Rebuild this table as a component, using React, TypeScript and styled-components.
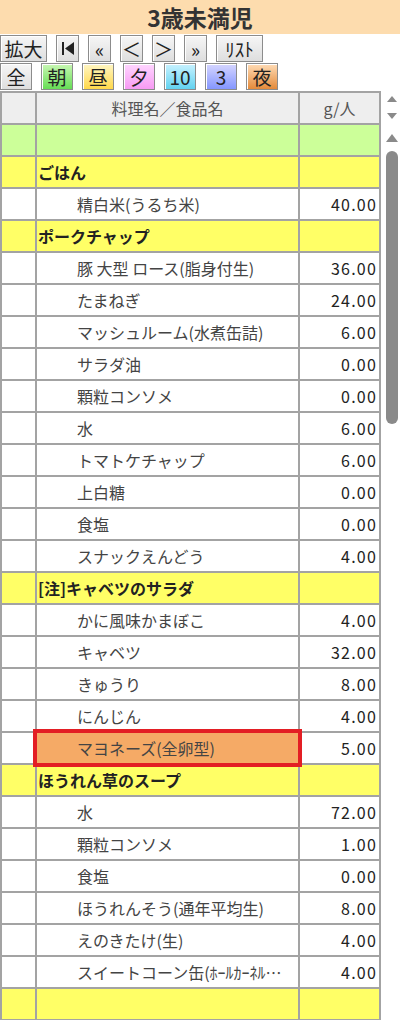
import React from 'react';
import styled, { createGlobalStyle, css } from 'styled-components';

type Row =
  | { kind: 'blank'; tone: 'green' | 'yellow' }
  | { kind: 'dish'; name: string }
  | { kind: 'item'; name: string; grams: string; selected?: boolean };

const rows: Row[] = [
  { kind: 'blank', tone: 'green' },
  { kind: 'dish', name: 'ごはん' },
  { kind: 'item', name: '精白米(うるち米)', grams: '40.00' },
  { kind: 'dish', name: 'ポークチャップ' },
  { kind: 'item', name: '豚 大型 ロース(脂身付生)', grams: '36.00' },
  { kind: 'item', name: 'たまねぎ', grams: '24.00' },
  { kind: 'item', name: 'マッシュルーム(水煮缶詰)', grams: '6.00' },
  { kind: 'item', name: 'サラダ油', grams: '0.00' },
  { kind: 'item', name: '顆粒コンソメ', grams: '0.00' },
  { kind: 'item', name: '水', grams: '6.00' },
  { kind: 'item', name: 'トマトケチャップ', grams: '6.00' },
  { kind: 'item', name: '上白糖', grams: '0.00' },
  { kind: 'item', name: '食塩', grams: '0.00' },
  { kind: 'item', name: 'スナックえんどう', grams: '4.00' },
  { kind: 'dish', name: '[注]キャベツのサラダ' },
  { kind: 'item', name: 'かに風味かまぼこ', grams: '4.00' },
  { kind: 'item', name: 'キャベツ', grams: '32.00' },
  { kind: 'item', name: 'きゅうり', grams: '8.00' },
  { kind: 'item', name: 'にんじん', grams: '4.00' },
  { kind: 'item', name: 'マヨネーズ(全卵型)', grams: '5.00', selected: true },
  { kind: 'dish', name: 'ほうれん草のスープ' },
  { kind: 'item', name: '水', grams: '72.00' },
  { kind: 'item', name: '顆粒コンソメ', grams: '1.00' },
  { kind: 'item', name: '食塩', grams: '0.00' },
  { kind: 'item', name: 'ほうれんそう(通年平均生)', grams: '8.00' },
  { kind: 'item', name: 'えのきたけ(生)', grams: '4.00' },
  { kind: 'item', name: 'スイートコーン缶(ﾎｰﾙｶｰﾈﾙ…', grams: '4.00' },
  { kind: 'blank', tone: 'yellow' },
];

type Tone = 'plain' | 'morning' | 'noon' | 'evening' | 'ten' | 'three' | 'night';

const mealButtons: { label: string; tone: Tone }[] = [
  { label: '全', tone: 'plain' },
  { label: '朝', tone: 'morning' },
  { label: '昼', tone: 'noon' },
  { label: '夕', tone: 'evening' },
  { label: '10', tone: 'ten' },
  { label: '3', tone: 'three' },
  { label: '夜', tone: 'night' },
];

const gradients: Record<Tone, string> = {
  plain: 'linear-gradient(#f6f6f6, #dedede)',
  morning: 'linear-gradient(#c9f7b4, #66dd55)',
  noon: 'linear-gradient(#fff6c4, #ffd84a)',
  evening: 'linear-gradient(#ffd6ff, #f79af4)',
  ten: 'linear-gradient(#c8f2ff, #62d2f0)',
  three: 'linear-gradient(#d6d6ff, #8496ff)',
  night: 'linear-gradient(#ffdcb6, #e48a3a)',
};

const App: React.FC = () => {
  return (
    <>
      <GlobalStyle />
      <TitleBar>3歳未満児</TitleBar>

      <ButtonRow>
        <ToolButton $wide>拡大</ToolButton>
        <ToolButton>
          <svg width="14" height="15" viewBox="0 0 14 15">
            <rect x="1" y="1" width="2" height="13" fill="#222" />
            <polygon points="13,1 13,14 4,7.5" fill="#222" />
          </svg>
        </ToolButton>
        <ToolButton>«</ToolButton>
        <ToolButton>＜</ToolButton>
        <ToolButton>＞</ToolButton>
        <ToolButton>»</ToolButton>
        <ToolButton $wide>ﾘｽﾄ</ToolButton>
      </ButtonRow>

      <ButtonRow>
        {mealButtons.map((b) => (
          <MealButton key={b.label} $tone={b.tone}>
            {b.label}
          </MealButton>
        ))}
      </ButtonRow>

      <Body>
        <Grid>
          <colgroup>
            <col style={{ width: 35 }} />
            <col style={{ width: 263 }} />
            <col />
          </colgroup>
          <thead>
            <tr>
              <HeadCell />
              <HeadCell>料理名／食品名</HeadCell>
              <HeadCell>g/人</HeadCell>
            </tr>
          </thead>
          <tbody>
            {rows.map((r, i) => {
              if (r.kind === 'blank') {
                return (
                  <tr key={i}>
                    <Cell $fill={r.tone} />
                    <Cell $fill={r.tone} />
                    <Cell $fill={r.tone} />
                  </tr>
                );
              }
              if (r.kind === 'dish') {
                return (
                  <tr key={i}>
                    <Cell $fill="yellow" />
                    <DishCell>{r.name}</DishCell>
                    <Cell $fill="yellow" />
                  </tr>
                );
              }
              return (
                <tr key={i}>
                  <Cell />
                  <ItemCell $selected={r.selected}>{r.name}</ItemCell>
                  <GramCell>{r.grams}</GramCell>
                </tr>
              );
            })}
          </tbody>
        </Grid>

        <ScrollTrack>
          <SmallUp />
          <SmallDown />
          <BigUp />
          <Thumb />
        </ScrollTrack>
      </Body>
    </>
  );
};

const GlobalStyle = createGlobalStyle`
  body {
    margin: 0;
    background: #fff;
    font-family: "Noto Sans CJK JP", "Noto Sans", sans-serif;
    color: #333;
  }
`;

const TitleBar = styled.div`
  height: 34px;
  background: #fddcae;
  display: flex;
  align-items: center;
  justify-content: center;
  font-size: 23px;
  font-weight: bold;
  color: #333;
`;

const ButtonRow = styled.div`
  display: flex;
  gap: 9px;
  height: 27px;
  margin-top: 1px;
`;

const buttonBase = css`
  box-sizing: border-box;
  height: 27px;
  display: flex;
  align-items: center;
  justify-content: center;
  border: 1px solid #8c8c8c;
  box-shadow: inset 1px 1px 0 #fff;
  font-family: "Noto Sans CJK JP", sans-serif;
  font-size: 19px;
  color: #222;
  padding: 0;
  line-height: 1;
`;

const ToolButton = styled.div<{ $wide?: boolean }>`
  ${buttonBase};
  width: ${(p) => (p.$wide ? '47px' : '23px')};
  background: linear-gradient(#f6f6f6, #dedede);
`;

const MealButton = styled.div<{ $tone: Tone }>`
  ${buttonBase};
  width: 32px;
  background: ${(p) => gradients[p.$tone]};
`;

const Body = styled.div`
  display: flex;
  margin-top: 1px;
`;

const Grid = styled.table`
  width: 381px;
  border-collapse: collapse;
  table-layout: fixed;
  font-size: 16px;
`;

const cellBase = css`
  border: 2px solid #a3a3a3;
  height: 32px;
  padding: 0;
  box-sizing: border-box;
  white-space: nowrap;
  overflow: hidden;
`;

const HeadCell = styled.th`
  ${cellBase};
  background: #eeeeee;
  font-weight: normal;
  font-size: 16px;
  color: #555;
  text-align: center;
`;

const Cell = styled.td<{ $fill?: 'green' | 'yellow' }>`
  ${cellBase};
  background: ${(p) =>
    p.$fill === 'green' ? '#ccff99' : p.$fill === 'yellow' ? '#ffff66' : '#fff'};
`;

const DishCell = styled.td`
  ${cellBase};
  background: #ffff66;
  font-weight: bold;
  color: #222;
  padding-left: 1px;
`;

const ItemCell = styled.td<{ $selected?: boolean }>`
  ${cellBase};
  padding-left: 40px;
  color: #444;
  background: ${(p) => (p.$selected ? '#f5aa66' : '#fff')};
  ${(p) =>
    p.$selected &&
    css`
      outline: 4px solid #e31e24;
      outline-offset: -1px;
    `}
`;

const GramCell = styled.td`
  ${cellBase};
  text-align: right;
  padding-right: 2px;
  letter-spacing: 1.2px;
  color: #222;
`;

const ScrollTrack = styled.div`
  width: 19px;
  display: flex;
  flex-direction: column;
  align-items: center;
  padding-top: 5px;
`;

const SmallUp = styled.div`
  width: 0;
  height: 0;
  margin-left: 2px;
  border-left: 5px solid transparent;
  border-right: 5px solid transparent;
  border-bottom: 6px solid #8a8a8a;
`;

const SmallDown = styled.div`
  width: 0;
  height: 0;
  margin: 11px 0 0 2px;
  border-left: 5px solid transparent;
  border-right: 5px solid transparent;
  border-top: 6px solid #8a8a8a;
`;

const BigUp = styled.div`
  width: 0;
  height: 0;
  margin: 15px 0 0 2px;
  border-left: 6px solid transparent;
  border-right: 6px solid transparent;
  border-bottom: 8px solid #8a8a8a;
`;

const Thumb = styled.div`
  width: 12px;
  height: 273px;
  margin: 9px 0 0 2px;
  border-radius: 6px;
  background: #8a8a8a;
`;

export default App;
